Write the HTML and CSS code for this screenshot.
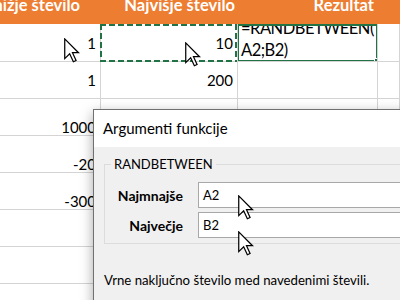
FILE: index.html
```html
<!DOCTYPE html>
<html lang="sl">

<head>
    <meta charset="UTF-8">
    <meta name="viewport" content="width=device-width, initial-scale=1.0">
    <title>RANDBETWEEN</title>
    <link rel="stylesheet" href="styles.css">
</head>

<body>
    <div class="sheet">
        <div class="row head">
            <div class="cell col-a">Najnižje število</div>
            <div class="cell col-b">Najvišje število</div>
            <div class="cell col-c">Rezultat</div>
            <div class="cell"></div>
        </div>
        <div class="row first mid">
            <div class="cell num">1</div>
            <div class="cell num copied">10</div>
            <div class="cell formula active"><span>=RANDBETWEEN(<wbr>A2;B2)</span></div>
            <div class="cell"></div>
        </div>
        <div class="row mid">
            <div class="cell num">1</div>
            <div class="cell num">200</div>
            <div class="cell"></div>
            <div class="cell"></div>
        </div>
        <div class="row">
            <div class="cell num">1000</div>
            <div class="cell num"></div>
            <div class="cell"></div>
            <div class="cell"></div>
        </div>
        <div class="row">
            <div class="cell num">-20</div>
            <div class="cell num"></div>
            <div class="cell"></div>
            <div class="cell"></div>
        </div>
        <div class="row">
            <div class="cell num">-300</div>
            <div class="cell num"></div>
            <div class="cell"></div>
            <div class="cell"></div>
        </div>
        <div class="row">
            <div class="cell"></div>
            <div class="cell"></div>
            <div class="cell"></div>
            <div class="cell"></div>
        </div>
        <div class="row">
            <div class="cell"></div>
            <div class="cell"></div>
            <div class="cell"></div>
            <div class="cell"></div>
        </div>
    </div>

    <div class="dialog">
        <div class="dialog-title">Argumenti funkcije</div>
        <div class="dialog-body">
            <fieldset class="args">
                <legend>RANDBETWEEN</legend>
                <div class="arg">
                    <label>Najmnajše</label>
                    <div class="field">A2</div>
                </div>
                <div class="arg">
                    <label>Največje</label>
                    <div class="field">B2</div>
                </div>
            </fieldset>
            <p class="desc">Vrne naključno število med navedenimi števili.</p>
        </div>
    </div>

    <!-- mouse pointers -->
    <svg class="pointer p1" width="16" height="25" viewBox="-0.6 -0.6 13 20"><path d="M0 0V16L4 12L7 18.5L9.2 17.5L6.3 11.2H11.2Z" /></svg>
    <svg class="pointer p2" width="16" height="25" viewBox="-0.6 -0.6 13 20"><path d="M0 0V16L4 12L7 18.5L9.2 17.5L6.3 11.2H11.2Z" /></svg>
    <svg class="pointer p3" width="16" height="25" viewBox="-0.6 -0.6 13 20"><path d="M0 0V16L4 12L7 18.5L9.2 17.5L6.3 11.2H11.2Z" /></svg>
    <svg class="pointer p4" width="16" height="25" viewBox="-0.6 -0.6 13 20"><path d="M0 0V16L4 12L7 18.5L9.2 17.5L6.3 11.2H11.2Z" /></svg>
</body>

</html>
```
FILE: styles.css
```css
body {
    margin: 0;
    background: white;
    overflow: hidden;
    font-family: Lato, "Liberation Sans", sans-serif;
    color: #000;
}

/* worksheet */
.sheet {
    margin: -10px 0 0 -54px;
}

.row {
    display: grid;
    grid-template-columns: 155px 137px 140px 1fr;
    height: 37px;
}

.row.first {
    height: 38px;
}

.cell {
    position: relative;
    box-sizing: border-box;
    border-right: 1px solid #d4d4d4;
    border-bottom: 1px solid #d4d4d4;
    display: flex;
    align-items: flex-end;
    justify-content: flex-end;
    font-size: 15px;
    line-height: 16px;
    padding-right: 4px;
    white-space: nowrap;
}

.row.mid .cell {
    align-items: center;
    line-height: 18px;
}

.row.head {
    height: 34px;
    background: #ed7d31;
}

.head .cell {
    border: none;
    align-items: flex-start;
    padding-top: 5px;
    color: white;
    font-weight: bold;
    font-size: 16.5px;
    line-height: 20px;
}

.head .col-a {
    padding-right: 21px;
}

.head .col-b {
    padding-right: 3px;
}

.head .col-c {
    padding-right: 4px;
}

.num {
    padding-right: 4px;
}

.copied::after {
    content: "";
    position: absolute;
    top: 0;
    left: -1px;
    right: 0;
    bottom: -1px;
    background:
        repeating-linear-gradient(90deg, #217346 0 6px, transparent 6px 9px) top / 100% 2px no-repeat,
        repeating-linear-gradient(90deg, #217346 0 6px, transparent 6px 9px) bottom / 100% 2px no-repeat,
        repeating-linear-gradient(180deg, #217346 0 6px, transparent 6px 9px) left / 2px 100% no-repeat,
        repeating-linear-gradient(180deg, #217346 0 6px, transparent 6px 9px) right / 2px 100% no-repeat;
}

.row .cell.formula {
    white-space: normal;
    justify-content: flex-start;
    align-items: flex-end;
    overflow: hidden;
    padding: 0 0 0 3px;
    font-size: 16.5px;
    letter-spacing: -0.5px;
    line-height: 22px;
}

.formula span {
    min-width: 0;
}

.active::after {
    content: "";
    position: absolute;
    top: 0;
    left: -1px;
    right: -1px;
    bottom: -1px;
    border: 2px solid #217346;
}

.active::before {
    content: "";
    position: absolute;
    right: -3px;
    bottom: -3px;
    width: 5px;
    height: 5px;
    background: #217346;
    outline: 1px solid white;
    z-index: 1;
}

/* function arguments dialog */
.dialog {
    position: absolute;
    left: 93px;
    top: 109px;
    width: 340px;
    height: 220px;
    border: 1px solid #707070;
    background: #f0f0f0;
    box-shadow: 0 4px 12px rgba(0, 0, 0, 0.35);
}

.dialog-title {
    height: 37px;
    box-sizing: border-box;
    padding: 8px 0 0 9px;
    background: white;
    font-size: 15px;
    line-height: 20px;
}

.dialog-body {
    padding: 9px 0 0 10px;
}

.args {
    margin: 0;
    padding: 10px 0 5px 0;
    border: 1px solid #dcdcdc;
    display: flex;
    flex-direction: column;
    gap: 4px;
}

.args legend {
    margin-left: 6px;
    padding: 0 3px;
    font-size: 13px;
    line-height: 16px;
}

.arg {
    display: grid;
    grid-template-columns: 78px 1fr;
    column-gap: 15px;
    align-items: center;
}

.arg label {
    text-align: right;
    font-weight: bold;
    font-size: 14px;
}

.field {
    height: 26px;
    box-sizing: border-box;
    border: 1px solid #a8a8a8;
    background: white;
    padding-left: 4px;
    font-size: 13px;
    line-height: 24px;
}

.desc {
    margin: 28px 0 0 0;
    font-size: 13.2px;
    line-height: 16px;
}

.pointer {
    position: absolute;
    fill: white;
    stroke: black;
    stroke-width: 1;
    stroke-linejoin: miter;
}

.p1 {
    left: 64px;
    top: 38px;
}

.p2 {
    left: 185px;
    top: 42px;
}

.p3 {
    left: 238px;
    top: 195px;
}

.p4 {
    left: 238px;
    top: 231px;
}
```
